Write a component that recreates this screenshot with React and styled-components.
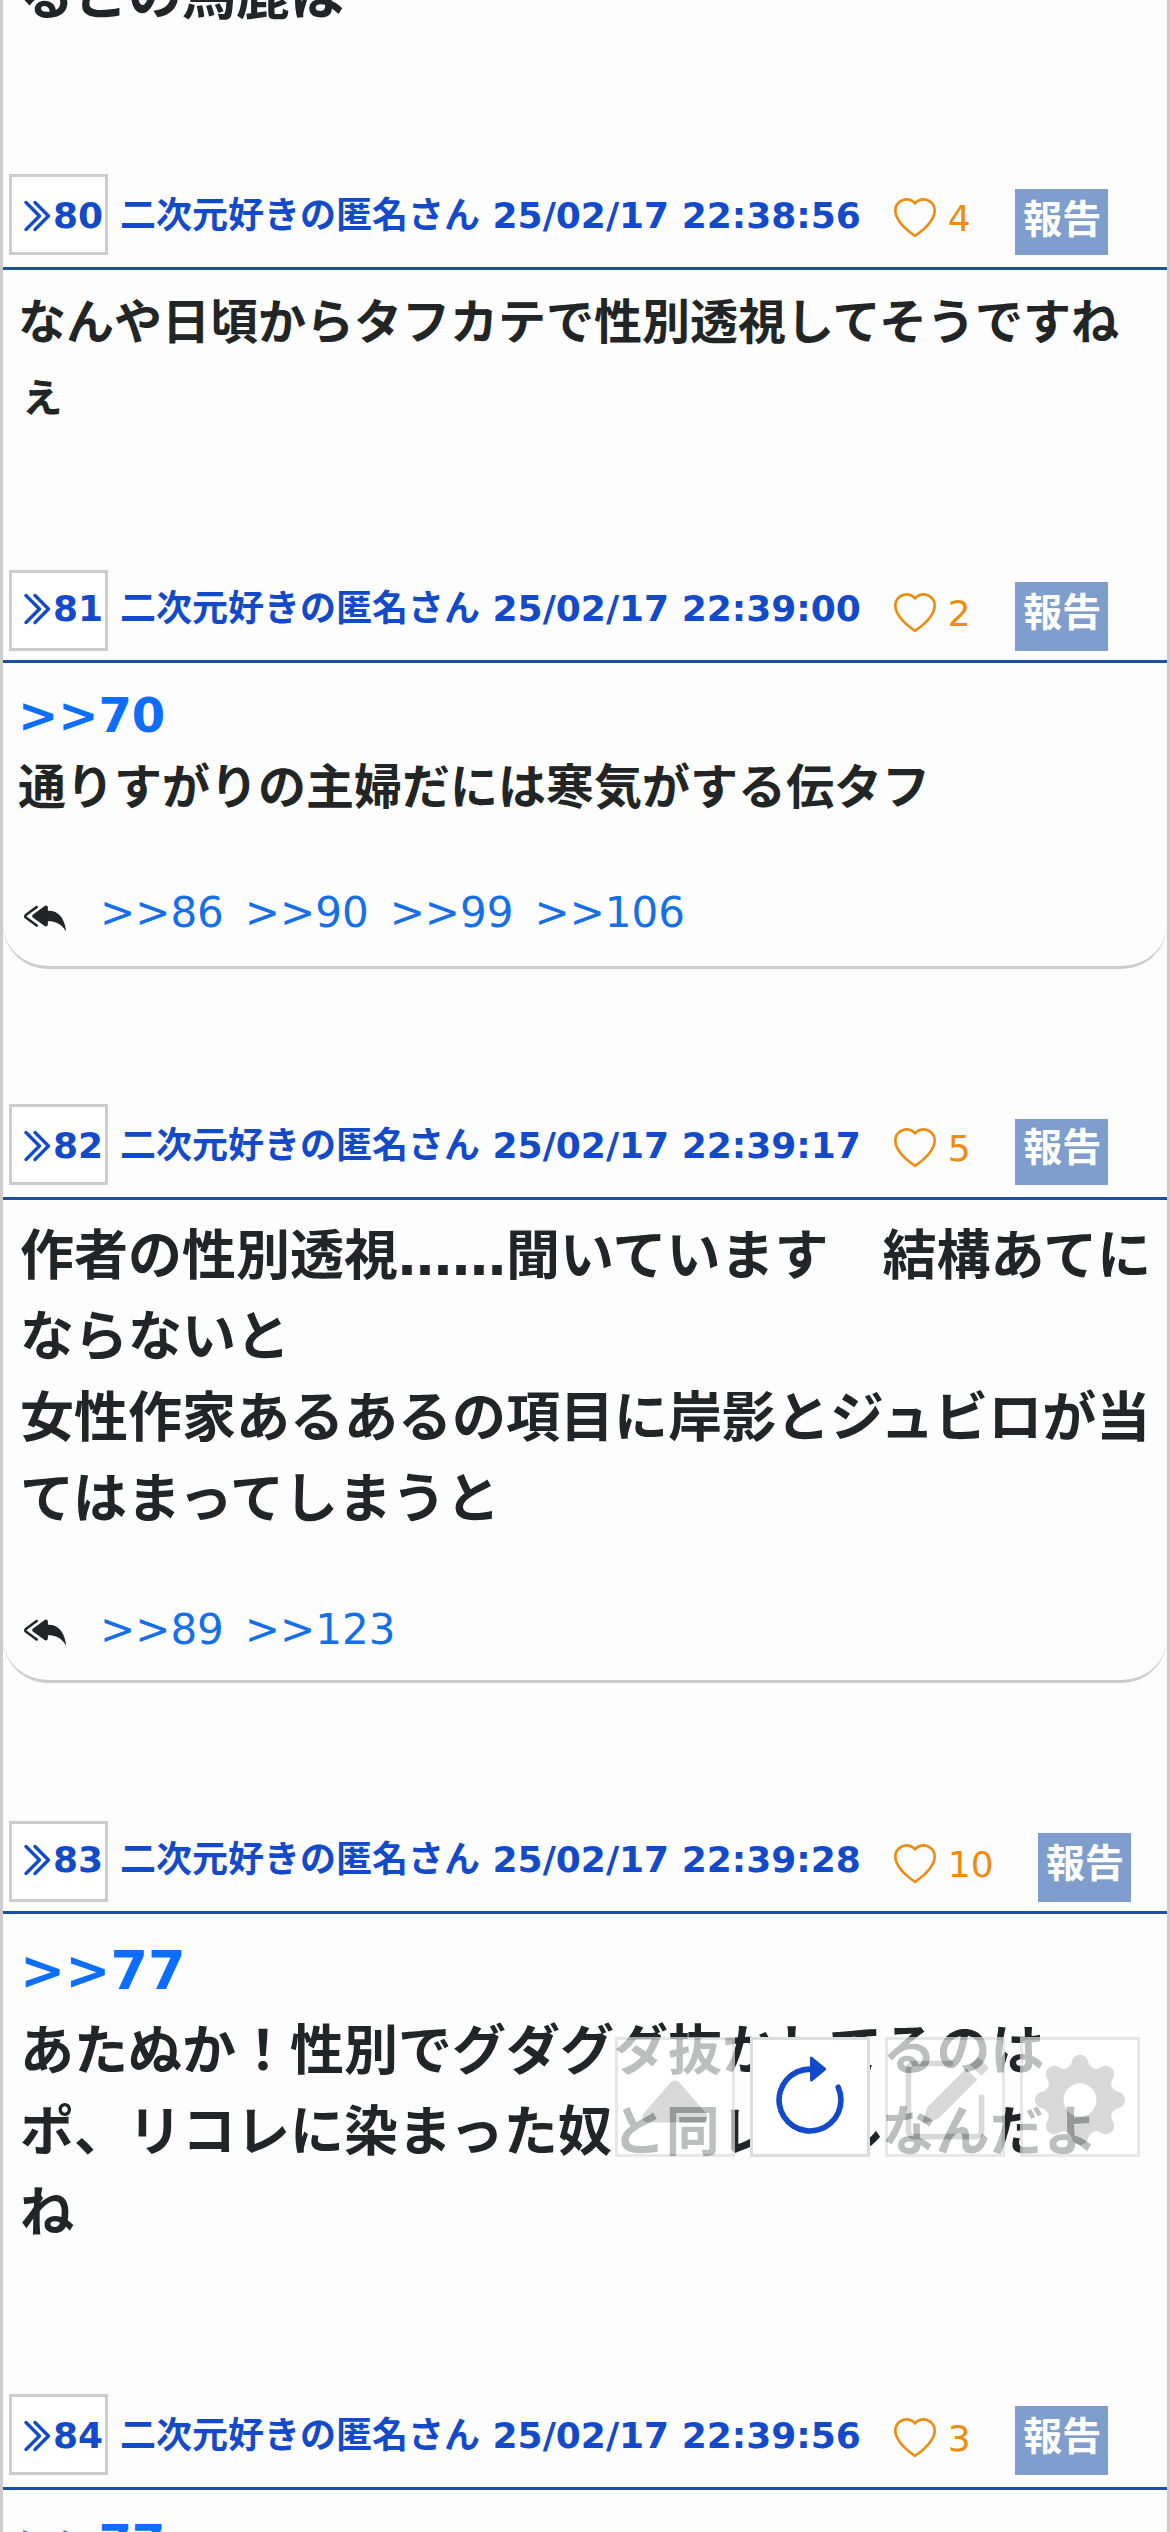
import React from "react";
import styled, {createGlobalStyle, css} from "styled-components";
import {
  BsArrowClockwise,
  BsCaretUpFill,
  BsChevronDoubleRight,
  BsGearFill,
  BsHeart,
  BsPencilSquare,
  BsReplyAllFill
} from "react-icons/bs";

const GlobalStyle = createGlobalStyle`
  * {
    box-sizing: border-box;
  }

  body {
    margin: 0;
    background-color: #fdfdfd;
    color: #222526;
    font-family: "DejaVu Sans", "Noto Sans CJK JP", sans-serif;
  }
`;

const Thread = styled.main`
  height: 2532px;
  overflow: hidden;
  border: solid #ccc;
  border-width: 0 3px;
`;

const Post = styled.article`
  margin-top: ${props => props.$offset || 0}px;
`;

const Header = styled.header`
  display: flex;
  align-items: flex-start;
  height: 96px;
  padding-left: 6px;
  border-bottom: 3px solid #1b4fa9;
  color: #124aca;
  font-size: 36px;
  font-weight: bold;
  line-height: 54px;
  white-space: nowrap;
`;

const NumberBox = styled.a`
  display: flex;
  align-items: center;
  width: 99px;
  height: 81px;
  margin-top: ${props => (props.$low ? 3 : 0)}px;
  padding: ${props => (props.$low ? "0 0 3px 5px" : "3px 0 0 5px")};
  border: 3px solid #ccc;
  background-color: #fff;

  svg {
    flex: none;
    stroke: currentColor;
    stroke-width: 0.5;
  }
`;

const Author = styled.span`
  margin: 15px 0 0 12px;
`;

const Like = styled.button`
  display: flex;
  align-items: center;
  gap: 12px;
  margin: ${props => (props.$low ? 20 : 18)}px 0 0 33px;
  padding: 0;
  border: 0;
  background: none;
  color: #ee8c12;
  font: 36px/54px "DejaVu Sans", sans-serif;
`;

const Report = styled.button`
  width: 93px;
  height: ${props => props.$height}px;
  margin: ${props => (props.$low ? 84 : 81) - props.$height}px 0 0 44px;
  padding: ${props => (props.$height > 66 || props.$tight ? "0 0 8px 2px" : "0 0 4px 2px")};
  border: 0;
  background-color: #7f9ecd;
  color: #fff;
  font: bold 39px/58px "DejaVu Sans", "Noto Sans CJK JP", sans-serif;
`;

const Body = styled.div`
  padding: 16px 0 0 15px;
  margin-bottom: ${props => props.$space}px;
  font-size: 48px;
  font-weight: bold;
  line-height: 72px;
  white-space: pre;

  ${props => props.$large && css`
    padding-left: 17px;
    font-size: 54px;
    line-height: 81px;
  `}
`;

const Anchor = styled.a`
  color: #0d6efd;
`;

const Replies = styled.footer`
  display: flex;
  align-items: center;
  gap: 21px;
  height: ${props => props.$height}px;
  margin-bottom: 135px;
  padding: ${props => props.$height - 98}px 0 6px 21px;
  border-bottom: 3px solid #ccc;
  border-radius: 0 0 45px 45px;
  color: #146fe9;
  font-size: 42px;
  line-height: 63px;

  svg {
    margin-right: 13px;
    color: #222526;
  }
`;

const ReplyLink = styled.a`
  padding-bottom: ${props => (props.$low ? 6 : 0)}px;
`;

const Tools = styled.nav`
  position: fixed;
  top: 2037px;
  right: 30px;
  display: flex;
  gap: 15px;
`;

const Tool = styled.button`
  display: flex;
  justify-content: center;
  width: 120px;
  height: 120px;
  padding: 15px 0 0;
  border: 3px solid #ddd;
  background-color: #fff;
  color: ${props => (props.$active ? "#124aca" : "#c9c9c9")};
  opacity: ${props => (props.$active ? 1 : 0.7)};
`;

const posts = [
  {
    id: 80,
    time: "22:38:56",
    likes: 4,
    reportHeight: 66,
    space: 137,
    text: "なんや日頃からタフカテで性別透視してそうですね\nぇ"
  },
  {
    id: 81,
    time: "22:39:00",
    likes: 2,
    low: true,
    reportHeight: 69,
    anchor: 70,
    text: "通りすがりの主婦だには寒気がする伝タフ",
    replies: [86, 90, 99, 106],
    repliesHeight: 146
  },
  {
    id: 82,
    time: "22:39:17",
    likes: 5,
    large: true,
    reportHeight: 66,
    tight: true,
    text:
      "作者の性別透視……聞いています　結構あてに\nならないと\n" +
      "女性作家あるあるの項目に岸影とジュビロが当\nてはまってしまうと",
    replies: [89, 123],
    repliesHeight: 143
  },
  {
    id: 83,
    time: "22:39:28",
    likes: 10,
    low: true,
    large: true,
    reportHeight: 69,
    anchor: 77,
    space: 140,
    text:
      "あたぬか！性別でグダグダ抜かしてるのは\n" +
      "ポ、リコレに染まった奴と同レベルなんだよ\nね"
  },
  {
    id: 84,
    time: "22:39:56",
    likes: 3,
    reportHeight: 69,
    anchor: 77,
    text: ""
  }
];

function PostItem({post}) {
  return (
    <Post>
      <Header>
        <NumberBox $low={post.low}>
          <BsChevronDoubleRight size={36}/>
          {post.id}
        </NumberBox>
        <Author>二次元好きの匿名さん 25/02/17 {post.time}</Author>
        <Like $low={post.low}>
          <BsHeart size={42}/>
          {post.likes}
        </Like>
        <Report $low={post.low} $height={post.reportHeight} $tight={post.tight}>
          報告
        </Report>
      </Header>
      <Body $large={post.large} $space={post.space || 0}>
        {post.anchor && <Anchor>{`>>${post.anchor}\n`}</Anchor>}
        {post.text}
      </Body>
      {post.replies && (
        <Replies $height={post.repliesHeight}>
          <BsReplyAllFill size={42}/>
          {post.replies.map(id => (
            <ReplyLink key={id} $low={post.low}>{`>>${id}`}</ReplyLink>
          ))}
        </Replies>
      )}
    </Post>
  );
}

export default function App() {
  return (
    <>
      <GlobalStyle/>
      <Thread>
        {/* end of the previous post, already scrolled past */}
        <Post $offset={-60}>
          <Body $large $space={137}>るこの馬鹿は</Body>
        </Post>
        {posts.map(post => <PostItem key={post.id} post={post}/>)}
      </Thread>
      <Tools>
        <Tool><BsCaretUpFill size={90}/></Tool>
        <Tool $active><BsArrowClockwise size={90}/></Tool>
        <Tool><BsPencilSquare size={90}/></Tool>
        <Tool><BsGearFill size={90}/></Tool>
      </Tools>
    </>
  );
}
